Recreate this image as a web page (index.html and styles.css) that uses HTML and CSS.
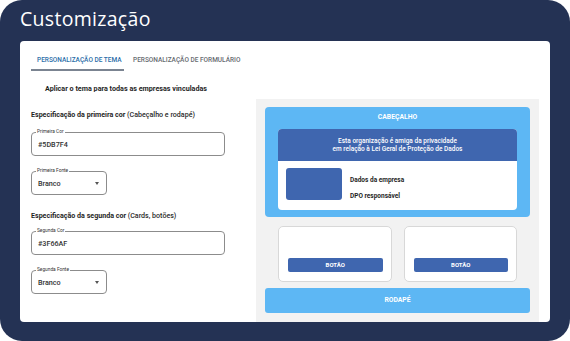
FILE: index.html
```html
<!DOCTYPE html>
<html lang="pt-BR">
<head>
<meta charset="utf-8">
<title>Customização</title>
<link rel="stylesheet" href="styles.css">
</head>
<body>
<div class="frame">
  <h1 class="title">Customização</h1>
  <div class="card">
    <div class="tabs">
      <div class="tab active">PERSONALIZAÇÃO DE TEMA</div>
      <div class="tab">PERSONALIZAÇÃO DE FORMULÁRIO</div>
    </div>
    <div class="apply">Aplicar o tema para todas as empresas vinculadas</div>
    <div class="columns">
      <div class="form">
        <div class="heading">Especificação da primeira cor <span class="light">(Cabeçalho e rodapé)</span></div>
        <div class="field wide">
          <span class="legend">Primeira Cor</span>
          <span class="value">#5DB7F4</span>
        </div>
        <div class="field select">
          <span class="legend">Primeira Fonte</span>
          <span class="value">Branco</span>
          <span class="caret"></span>
        </div>
        <div class="heading second">Especificação da segunda cor <span class="light">(Cards, botões)</span></div>
        <div class="field wide">
          <span class="legend">Segunda Cor</span>
          <span class="value">#3F66AF</span>
        </div>
        <div class="field select">
          <span class="legend">Segunda Fonte</span>
          <span class="value">Branco</span>
          <span class="caret"></span>
        </div>
      </div>
      <div class="preview">
        <div class="header">
          <div class="header-label">CABEÇALHO</div>
          <div class="notice">
            <div class="notice-top">Esta organização é amiga da privacidade<br>em relação à Lei Geral de Proteção de Dados</div>
            <div class="notice-body">
              <div class="logo"></div>
              <div class="info">
                <div>Dados da empresa</div>
                <div>DPO responsável</div>
              </div>
            </div>
          </div>
        </div>
        <div class="cards">
          <div class="mini-card"><div class="btn">BOTÃO</div></div>
          <div class="mini-card"><div class="btn">BOTÃO</div></div>
        </div>
        <div class="footer">RODAPÉ</div>
      </div>
    </div>
  </div>
</div>
</body>
</html>
```
FILE: styles.css
```css
* { box-sizing: border-box; }
html, body { margin: 0; padding: 0; background: #ffffff; }
body { font-family: Roboto, "Liberation Sans", sans-serif; }

.frame {
  width: 570px;
  height: 341px;
  background: #243254;
  border-radius: 22px;
  padding: 0 20px;
  display: flex;
  flex-direction: column;
}

.title {
  margin: 0;
  height: 41px;
  padding-top: 6px;
  font-family: "Open Sans", sans-serif;
  font-weight: 400;
  font-size: 19.5px;
  line-height: 26px;
  color: #ffffff;
  letter-spacing: 0.3px;
}

.card {
  height: 281px;
  background: #ffffff;
  border-radius: 4px;
  padding: 0 11px;
  display: flex;
  flex-direction: column;
  overflow: hidden;
}

.tabs {
  display: flex;
  margin-top: 10px;
  height: 20px;
}
.tab {
  height: 20px;
  padding: 0 5px 0 6px;
  font-size: 6.5px;
  font-weight: 500;
  line-height: 18px;
  color: #666a70;
  white-space: nowrap;
}
.tab.active {
  width: 93px;
  color: #2b6da8;
  border-bottom: 2px solid #7b8491;
  margin-right: 3px;
}

.apply {
  height: 28px;
  padding-left: 14px;
  font-size: 7.2px;
  font-weight: 700;
  line-height: 36px;
  color: #1f1f1f;
}

.columns {
  display: flex;
  flex: 1;
}

.form {
  width: 225px;
  padding-top: 10px;
  display: flex;
  flex-direction: column;
  align-items: flex-start;
}

.heading {
  font-size: 7.1px;
  font-weight: 700;
  line-height: 12px;
  color: #1f1f1f;
  margin-bottom: 11px;
  white-space: nowrap;
}
.heading .light { font-weight: 500; color: #2a2a2a; }
.heading.second { margin-top: 15px; margin-bottom: 9px; }

.field {
  position: relative;
  height: 24px;
  border: 1px solid #8c8c8c;
  border-radius: 4px;
  display: flex;
  align-items: center;
  padding-left: 6px;
}
.field.wide { width: 194px; }
.field.select { width: 76px; margin-top: 15px; padding-right: 7px; justify-content: space-between; }

.legend {
  position: absolute;
  top: -4px;
  left: 4px;
  padding: 0 1px;
  background: #ffffff;
  font-size: 4.8px;
  line-height: 6px;
  color: #333333;
}
.value {
  font-size: 7.2px;
  font-weight: 500;
  color: #333333;
}
.caret {
  width: 0;
  height: 0;
  border-left: 2.5px solid transparent;
  border-right: 2.5px solid transparent;
  border-top: 3px solid #555555;
}

.preview {
  width: 283px;
  background: #f2f2f2;
  padding: 8px 9px 0 9px;
  display: flex;
  flex-direction: column;
}

.header {
  height: 110px;
  background: #5db7f4;
  border-radius: 4px;
  display: flex;
  flex-direction: column;
}
.header-label {
  height: 22px;
  text-align: center;
  font-size: 6.8px;
  font-weight: 700;
  line-height: 21px;
  color: #ffffff;
}
.notice {
  margin: 0 13px;
  height: 81px;
  border-radius: 4px;
  overflow: hidden;
  background: #ffffff;
  display: flex;
  flex-direction: column;
}
.notice-top {
  height: 32px;
  background: #3f66af;
  color: #ffffff;
  text-align: center;
  font-size: 6.5px;
  font-weight: 500;
  line-height: 8px;
  padding-top: 8px;
}
.notice-body {
  flex: 1;
  display: flex;
  align-items: flex-start;
  padding: 7px 8px 0 8px;
  gap: 8px;
}
.logo {
  width: 56px;
  height: 32px;
  border-radius: 3px;
  background: #3f66af;
}
.info {
  padding-top: 8px;
  display: flex;
  flex-direction: column;
  gap: 8px;
  font-size: 6.5px;
  font-weight: 700;
  line-height: 8px;
  color: #1f1f1f;
}

.cards {
  margin-top: 9px;
  padding: 0 13px;
  display: flex;
  gap: 12px;
  height: 56px;
}
.mini-card {
  flex: 1;
  background: #ffffff;
  border: 1px solid #d8d8d8;
  border-radius: 5px;
  display: flex;
  flex-direction: column;
  justify-content: flex-end;
  padding: 0 8px 9px 9px;
}
.btn {
  height: 14px;
  background: #3f66af;
  border-radius: 2px;
  color: #ffffff;
  text-align: center;
  font-size: 6px;
  font-weight: 700;
  line-height: 14px;
}

.footer {
  margin-top: 6px;
  height: 25px;
  background: #5db7f4;
  border-radius: 3px;
  text-align: center;
  font-size: 6.8px;
  font-weight: 700;
  line-height: 25px;
  color: #ffffff;
}
```
